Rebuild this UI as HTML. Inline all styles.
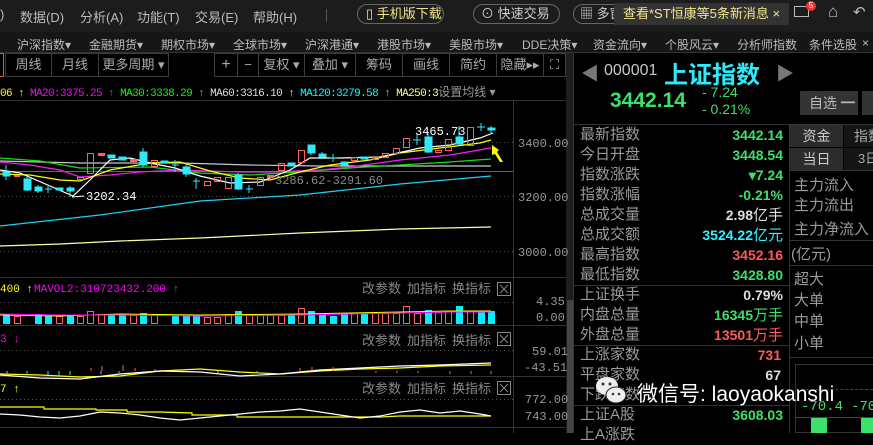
<!DOCTYPE html>
<html><head><meta charset="utf-8"><style>
*{margin:0;padding:0;box-sizing:border-box}
body{width:873px;height:433px;background:#000;overflow:hidden;position:relative;font-family:"Liberation Sans","Noto Sans CJK SC",sans-serif;color:#c8c8c8}
.a{position:absolute;white-space:nowrap}
.m{font-size:12px;color:#bbb}
.btn{position:absolute;border:1px solid #3c3c3c;height:24px;top:53px;font-size:13px;color:#aaa;text-align:center;line-height:22px}
.lbl{position:absolute;left:580px;font-size:15px;color:#9a9a9a;line-height:20px}
.val{position:absolute;right:90px;font-size:14px;font-weight:bold;line-height:20px}
.g{color:#3ce06a}.r{color:#ff5a5a}.w{color:#ddd}.c{color:#30f0ff}
.rl{position:absolute;left:794px;font-size:15px;color:#9a9a9a}
</style></head><body>
<div class="a" style="left:0;top:0;width:873px;height:32px;background:#1c1c1c"></div>
<div class="a m" style="left:0;top:7px;font-size:13px">)</div>
<div class="a m" style="left:20px;top:7px;font-size:13px">数据(D)</div>
<div class="a m" style="left:80px;top:7px;font-size:13px">分析(A)</div>
<div class="a m" style="left:137px;top:7px;font-size:13px">功能(T)</div>
<div class="a m" style="left:195px;top:7px;font-size:13px">交易(E)</div>
<div class="a m" style="left:253px;top:7px;font-size:13px">帮助(H)</div>
<div class="a" style="left:326px;top:9px;width:1px;height:13px;background:#555"></div>
<div class="a" style="left:357px;top:4px;width:87px;height:20px;border:1px solid #666;border-radius:10px;color:#f0e68c;font-size:13px;line-height:18px;padding-left:8px">▯ 手机版下载</div>
<div class="a" style="left:473px;top:4px;width:87px;height:20px;border:1px solid #666;border-radius:10px;color:#ccc;font-size:13px;line-height:18px;padding-left:7px">⊙ 快速交易</div>
<div class="a" style="left:573px;top:4px;width:60px;height:20px;border:1px solid #666;border-radius:10px;color:#ccc;font-size:13px;line-height:18px;padding-left:6px">▦ 多窗</div>
<div class="a" style="left:614px;top:3px;width:175px;height:22px;background:#333;color:#f0e68c;font-size:13px;line-height:22px;padding-left:9px">查看*ST恒康等5条新消息 ×</div>
<div class="a" style="left:794px;top:6px;width:15px;height:11px;border:1px solid #bbb"></div>
<div class="a" style="left:806px;top:1px;width:10px;height:10px;border-radius:5px;background:#e33;color:#fff;font-size:8px;text-align:center;line-height:10px">5</div>
<div class="a" style="left:828px;top:2px;color:#bbb;font-size:17px">⌂</div>
<div class="a" style="left:853px;top:3px;color:#bbb;font-size:15px">↶</div>
<div class="a" style="left:0;top:32px;width:873px;height:21px;background:#161616;border-bottom:1px solid #333"></div>
<div class="a m" style="left:17px;top:36px">沪深指数▾</div>
<div class="a m" style="left:89px;top:36px">金融期货▾</div>
<div class="a m" style="left:161px;top:36px">期权市场▾</div>
<div class="a m" style="left:233px;top:36px">全球市场▾</div>
<div class="a m" style="left:305px;top:36px">沪深港通▾</div>
<div class="a m" style="left:377px;top:36px">港股市场▾</div>
<div class="a m" style="left:449px;top:36px">美股市场▾</div>
<div class="a m" style="left:522px;top:36px">DDE决策▾</div>
<div class="a m" style="left:593px;top:36px">资金流向▾</div>
<div class="a m" style="left:665px;top:36px">个股风云▾</div>
<div class="a m" style="left:737px;top:36px">分析师指数</div>
<div class="a m" style="left:809px;top:36px">条件选股</div>
<div class="a m" style="left:862px;top:36px">×</div>
<div class="a" style="left:0;top:53px;width:4px;height:24px;border:1px solid #e06020;border-left:none"></div>
<div class="btn" style="left:5px;width:47px">周线</div>
<div class="btn" style="left:51px;width:48px">月线</div>
<div class="btn" style="left:98px;width:71px">更多周期 ▾</div>
<div class="btn" style="left:214px;width:24px;font-size:16px">+</div>
<div class="btn" style="left:237px;width:22px">−</div>
<div class="btn" style="left:258px;width:47px">复权 ▾</div>
<div class="btn" style="left:304px;width:52px">叠加 ▾</div>
<div class="btn" style="left:355px;width:48px">筹码</div>
<div class="btn" style="left:402px;width:48px">画线</div>
<div class="btn" style="left:449px;width:48px">简约</div>
<div class="btn" style="left:496px;width:48px">隐藏▸▸</div>
<div class="btn" style="left:543px;width:23px">⛶</div>
<div class="a" style="left:0;top:83px;font-size:11px;letter-spacing:-0.6px;font-family:'Liberation Mono',monospace"><span style="color:#ff0">06 ↑</span> <span style="color:#f0f">MA20:3375.25 ↑</span> <span style="color:#0f0">MA30:3338.29 ↑</span> <span style="color:#ddd">MA60:3316.10 ↑</span> <span style="color:#0ff">MA120:3279.58 ↑</span> <span style="color:#ff8">MA250:3</span><span style="color:#999;letter-spacing:0;font-family:'Liberation Sans','Noto Sans CJK SC',sans-serif;font-size:12px">设置均线 ▾</span></div>
<div class="a" style="left:566px;top:53px;width:7px;height:380px;background:#1e1e1e"></div>
<div class="a" style="left:567px;top:300px;width:6px;height:133px;background:#444"></div>
<svg class="a" style="left:0;top:0" width="573" height="433">
<g stroke="#333" stroke-width="1">
<line x1="0" y1="100.5" x2="566" y2="100.5"/>
<line x1="513.5" y1="100" x2="513.5" y2="433"/>
<line x1="0" y1="277.5" x2="566" y2="277.5"/>
<line x1="0" y1="325.5" x2="566" y2="325.5"/>
<line x1="0" y1="376.5" x2="566" y2="376.5"/>
<line x1="0" y1="427.5" x2="566" y2="427.5"/>
</g>
<g stroke="#555" stroke-dasharray="1,3">
<line x1="0" y1="142.5" x2="513" y2="142.5"/><line x1="0" y1="196.5" x2="513" y2="196.5"/><line x1="0" y1="251.5" x2="513" y2="251.5"/>
<line x1="0" y1="302.5" x2="513" y2="302.5"/><line x1="0" y1="350.5" x2="513" y2="350.5"/><line x1="0" y1="399.5" x2="513" y2="399.5"/>
</g>
<line x1="0" y1="171.5" x2="513" y2="171.5" stroke="#666"/>
<g font-family="Liberation Mono,monospace" font-size="12" fill="#999">
<text x="518" y="147">3400.00</text><text x="518" y="201">3200.00</text><text x="518" y="256">3000.00</text>
<text x="536" y="305">4.35</text><text x="536" y="321">0.00</text>
<text x="532" y="355">59.01</text><text x="524" y="371">-43.51</text>
<text x="525" y="403">772.00</text><text x="525" y="420">743.00</text>
</g>
<g fill="none" stroke-width="1.2">
<polyline stroke="#ffffa0" points="0,246 60,244 120,241 200,238 300,233 400,229 491,227"/>
<polyline stroke="#20d0f0" points="0,226 100,215 200,201 300,195 400,184 491,176"/>
<polyline stroke="#c8c8c8" points="0,161 80,163 180,163 250,165 320,166 400,166 491,166"/>
<polyline stroke="#10e010" points="0,158 40,161 80,168 150,167 200,173 250,175 300,172 350,168 400,165 450,162 491,159"/>
<polyline stroke="#f020f0" points="0,162 30,165 60,170 80,177 110,175 140,172 180,170 240,172 270,172 320,170 350,167 400,160 450,155 491,148"/>
<polyline stroke="#ffff00" points="0,174 30,175 60,180 80,181 110,170 150,163 180,162 210,171 240,178 270,180 300,172 330,165 370,160 400,153 440,148 480,143 491,140"/>
<polyline stroke="#fff" points="0,170 20,173 50,186 73,196 90,180 110,160 130,158 150,163 175,168 200,176 230,183 260,182 290,170 310,158 340,158 380,157 420,148 450,145 480,138 493,133"/>
</g>
<g stroke="#30e8f8" fill="#30e8f8">
<line x1="6" y1="165" x2="6" y2="180"/><rect x="3" y="172" width="7" height="4"/>
<line x1="27" y1="177" x2="27" y2="191"/><rect x="24" y="179" width="7" height="11"/>
<line x1="38" y1="185" x2="38" y2="193"/><rect x="35" y="187" width="7" height="4"/>
<line x1="48" y1="185" x2="48" y2="193"/><line x1="45" y1="189" x2="52" y2="189"/>
<rect x="56" y="188" width="7" height="2"/>
<line x1="70" y1="186" x2="70" y2="197"/><rect x="67" y="188" width="7" height="3"/>
<rect x="108" y="155" width="7" height="3"/><rect x="119" y="157" width="7" height="3"/>
<line x1="143" y1="148" x2="143" y2="167"/><rect x="140" y="152" width="7" height="13"/>
<rect x="161" y="161" width="7" height="2"/>
<line x1="175" y1="160" x2="175" y2="172"/><line x1="172" y1="165" x2="179" y2="165"/>
<line x1="186" y1="165" x2="186" y2="177"/><rect x="183" y="167" width="7" height="7"/>
<line x1="196" y1="178" x2="196" y2="189"/><line x1="193" y1="181" x2="200" y2="181"/>
<line x1="238" y1="173" x2="238" y2="190"/><rect x="235" y="175" width="7" height="14"/>
<line x1="249" y1="185" x2="249" y2="193"/><line x1="246" y1="189" x2="253" y2="189"/>
<rect x="288" y="163" width="7" height="3"/>
<line x1="311" y1="145" x2="311" y2="155"/><rect x="308" y="145" width="7" height="8"/>
<line x1="322" y1="152" x2="322" y2="159"/><rect x="319" y="154" width="7" height="3"/>
<line x1="333" y1="154" x2="333" y2="162"/><line x1="330" y1="158" x2="337" y2="158"/>
<rect x="341" y="162" width="7" height="3"/><rect x="361" y="157" width="7" height="2"/>
<line x1="417" y1="135" x2="417" y2="145"/><line x1="413" y1="140" x2="421" y2="140"/>
<line x1="428" y1="134" x2="428" y2="153"/><rect x="425" y="137" width="7" height="15"/>
<line x1="459" y1="126" x2="459" y2="145"/><rect x="456" y="137" width="7" height="7"/>
<line x1="481" y1="123" x2="481" y2="131"/><line x1="477" y1="127" x2="485" y2="127"/>
<line x1="491" y1="126" x2="491" y2="133"/><rect x="488" y="128" width="7" height="2"/>
</g>
<g stroke="#ff6060" fill="none">
<rect x="14.5" y="175.5" width="5" height="1"/>
<rect x="77.5" y="177.5" width="6" height="2"/>
<rect x="87.5" y="153.5" width="6" height="20"/>
<rect x="98.5" y="153.5" width="6" height="2" fill="#ff6060"/>
<rect x="130.5" y="159.5" width="6" height="2" fill="#ff6060"/>
<rect x="151.5" y="160.5" width="6" height="6"/>
<rect x="204.5" y="181.5" width="6" height="4"/>
<rect x="214.5" y="177.5" width="6" height="4"/>
<rect x="225.5" y="177.5" width="6" height="11"/>
<rect x="257.5" y="177.5" width="6" height="8"/>
<rect x="267.5" y="175.5" width="6" height="2" fill="#ff6060"/>
<rect x="278.5" y="163.5" width="6" height="7"/>
<rect x="298.5" y="150.5" width="6" height="12"/>
<rect x="351.5" y="157.5" width="6" height="3"/>
<rect x="372.5" y="157.5" width="6" height="2"/>
<rect x="382.5" y="153.5" width="6" height="4"/>
<rect x="393.5" y="148.5" width="6" height="5"/>
<rect x="403.5" y="138.5" width="6" height="9"/>
<rect x="435.5" y="150.5" width="6" height="2"/>
<rect x="445.5" y="139.5" width="6" height="11"/>
<rect x="467.5" y="127.5" width="6" height="18"/>
</g>
<g font-family="Liberation Mono,monospace" font-size="12">
<text x="86" y="200" fill="#fff">3202.34</text>
<text x="415" y="135" fill="#fff">3465.73</text>
<text x="275" y="184" fill="#888">3286.62-3291.60</text>
</g>
<line x1="84" y1="196" x2="72" y2="197" stroke="#fff"/>
<polygon points="492,145 499,150 497,152 503,162 500,162 495,154 492,155" fill="#ff0"/>
<g font-size="11" font-family="Liberation Mono,monospace">
<text x="0" y="292" fill="#ff0">400 ↑</text><text x="34" y="292" fill="#f0f">MAVOL2:310723432.200 ↑</text>
<text x="0" y="342" fill="#f0f">3 ↓</text>
<text x="0" y="392" fill="#ff0">7 ↑</text>
</g>
<g font-size="13" fill="#888" font-family="Liberation Sans,Noto Sans CJK SC,sans-serif">
<text x="362" y="293">改参数</text><text x="407" y="293">加指标</text><text x="452" y="293">换指标</text>
<text x="362" y="345">改参数</text><text x="407" y="345">加指标</text><text x="452" y="345">换指标</text>
<text x="362" y="393">改参数</text><text x="407" y="393">加指标</text><text x="452" y="393">换指标</text>
</g>
<g stroke="#888" fill="none"><rect x="497.5" y="282.5" width="13" height="13"/><rect x="497.5" y="332.5" width="13" height="13"/><rect x="497.5" y="381.5" width="13" height="13"/>
<path d="M500 285l8 8M508 285l-8 8M500 335l8 8M508 335l-8 8M500 384l8 8M508 384l-8 8"/></g>
<g fill="#00f0ff">
<rect x="3" y="314" width="7" height="10"/><rect x="35" y="314" width="7" height="10"/><rect x="45" y="316" width="7" height="8"/><rect x="67" y="315" width="7" height="9"/>
<rect x="108" y="315" width="7" height="9"/><rect x="119" y="315" width="7" height="9"/><rect x="140" y="313" width="7" height="11"/><rect x="172" y="315" width="7" height="9"/><rect x="183" y="315" width="7" height="9"/><rect x="193" y="315" width="7" height="9"/>
<rect x="235" y="311" width="7" height="13"/><rect x="288" y="314" width="7" height="10"/><rect x="308" y="311" width="7" height="13"/><rect x="319" y="315" width="7" height="9"/><rect x="330" y="316" width="7" height="8"/><rect x="341" y="313" width="7" height="11"/><rect x="361" y="313" width="7" height="11"/>
<rect x="425" y="310" width="7" height="14"/><rect x="456" y="306" width="7" height="18"/><rect x="478" y="312" width="7" height="12"/><rect x="488" y="311" width="7" height="13"/>
</g>
<g stroke="#ff6060" fill="none">
<rect x="14.5" y="316.5" width="6" height="7"/><rect x="56.5" y="316.5" width="6" height="7"/><rect x="77.5" y="316.5" width="6" height="7"/><rect x="87.5" y="311.5" width="6" height="12"/><rect x="98.5" y="314.5" width="6" height="9"/><rect x="130.5" y="315.5" width="6" height="8"/><rect x="151.5" y="315.5" width="6" height="8"/>
<rect x="204.5" y="317.5" width="6" height="6"/><rect x="214.5" y="317.5" width="6" height="6"/><rect x="225.5" y="314.5" width="6" height="9"/><rect x="246.5" y="314.5" width="6" height="9"/><rect x="257.5" y="315.5" width="6" height="8"/><rect x="267.5" y="315.5" width="6" height="8"/><rect x="278.5" y="315.5" width="6" height="8"/><rect x="298.5" y="308.5" width="6" height="15"/>
<rect x="351.5" y="313.5" width="6" height="10"/><rect x="372.5" y="313.5" width="6" height="10"/><rect x="382.5" y="313.5" width="6" height="10"/><rect x="393.5" y="313.5" width="6" height="10"/><rect x="403.5" y="306.5" width="6" height="17"/><rect x="414.5" y="313.5" width="6" height="10"/><rect x="435.5" y="312.5" width="6" height="11"/><rect x="445.5" y="311.5" width="6" height="12"/><rect x="467.5" y="311.5" width="6" height="12"/>
</g>
<polyline fill="none" stroke="#ff0" points="0,315 60,316 120,314 200,315 300,314 350,313 400,312 450,311 491,311"/>
<polyline fill="none" stroke="#f0f" points="0,314 60,315 120,315 200,316 300,315 350,314 400,313 450,312 491,312"/>
<polyline fill="none" stroke="#ff0" stroke-width="1.2" points="0,374 40,375 80,377 120,376 160,371 200,369 240,372 280,374 320,371 360,369 400,368 440,366 491,365"/>
<polyline fill="none" stroke="#fff" stroke-width="1.2" points="0,375 40,378 80,379 120,374 160,371 200,372 240,376 280,374 320,370 360,368 400,366 440,365 491,363"/>
<g stroke="#30e8f8"><path d="M7 371v3M27 371v4M48 371v4M59 371v5M70 371v4M101 371v3M119 371v2M218 371v2M239 371v2M257 371v2"/></g>
<g stroke="#ff6060"><path d="M91 368v3M102 366v5M123 365v6M135 368v3M155 369v2M300 368v3M312 367v4M333 367v4M376 371v2M397 371v2M418 371v2M450 371v3M471 371v3M491 371v3"/></g>
<polyline fill="none" stroke="#ff0" stroke-width="1.2" points="0,407 44,407 44,409 96,409 96,410 127,410 127,412 160,412 192,413 192,415 237,415 237,417 300,417 380,417 400,416 491,416"/>
<polyline fill="none" stroke="#fff" stroke-width="1.2" points="0,414 20,415 40,417 60,418 80,416 100,412 120,413 140,415 160,418 180,420 200,418 220,416 240,414 260,412 280,411 300,409 320,412 340,415 360,418 380,416 400,412 420,410 440,413 460,411 480,414 491,416"/>
</svg>
<div class="a" style="left:573px;top:53px;width:1px;height:380px;background:#333"></div>
<div class="a" style="left:581px;top:60px;color:#777;font-size:18px">◀</div>
<div class="a" style="left:604px;top:62px;color:#c8c8c8;font-size:16px">000001</div>
<div class="a" style="left:664px;top:55px;color:#30e8f8;font-size:24px;font-weight:bold">上证指数</div>
<div class="a" style="left:776px;top:60px;color:#777;font-size:18px">▶</div>
<div class="a g" style="left:610px;top:89px;font-size:21px;font-weight:bold">3442.14</div>
<div class="a g" style="left:702px;top:84px;font-size:14px">- 7.24</div>
<div class="a g" style="left:702px;top:101px;font-size:14px">- 0.21%</div>
<div class="a" style="left:800px;top:91px;width:58px;height:24px;background:#333;color:#bbb;font-size:14px;line-height:24px;padding-left:9px">自选 ━</div>
<div class="a" style="left:862px;top:91px;width:11px;height:24px;background:#333"></div>
<div class="a" style="left:573px;top:124px;width:300px;height:1px;background:#333"></div>
<div class="a" style="left:789px;top:124px;width:1px;height:309px;background:#333"></div>
<div class="lbl" style="top:125px">最新指数</div><div class="val g" style="top:125px">3442.14</div>
<div class="lbl" style="top:145px">今日开盘</div><div class="val g" style="top:145px">3448.54</div>
<div class="lbl" style="top:165px">指数涨跌</div><div class="val g" style="top:165px">▾7.24</div>
<div class="lbl" style="top:185px">指数涨幅</div><div class="val g" style="top:185px">-0.21%</div>
<div class="lbl" style="top:205px">总成交量</div><div class="val w" style="top:205px">2.98<span style="font-weight:normal;font-size:15px">亿手</span></div>
<div class="lbl" style="top:225px">总成交额</div><div class="val c" style="top:225px">3524.22<span style="font-weight:normal;font-size:15px">亿元</span></div>
<div class="lbl" style="top:245px">最高指数</div><div class="val r" style="top:245px">3452.16</div>
<div class="lbl" style="top:265px">最低指数</div><div class="val g" style="top:265px">3428.80</div>
<div class="a" style="left:573px;top:285px;width:216px;height:1px;background:#333"></div>
<div class="lbl" style="top:285px">上证换手</div><div class="val w" style="top:285px">0.79%</div>
<div class="lbl" style="top:305px">内盘总量</div><div class="val g" style="top:305px">16345<span style="font-weight:normal;font-size:15px">万手</span></div>
<div class="lbl" style="top:325px">外盘总量</div><div class="val r" style="top:325px">13501<span style="font-weight:normal;font-size:15px">万手</span></div>
<div class="a" style="left:573px;top:345px;width:216px;height:1px;background:#333"></div>
<div class="lbl" style="top:345px">上涨家数</div><div class="val r" style="top:345px;right:92px">731</div>
<div class="lbl" style="top:365px">平盘家数</div><div class="val w" style="top:365px;right:92px">67</div>
<div class="lbl" style="top:385px">下跌家数</div>
<div class="a" style="left:573px;top:405px;width:216px;height:1px;background:#333"></div>
<div class="lbl" style="top:405px">上证A股</div><div class="val g" style="top:405px">3608.03</div>
<div class="lbl" style="top:425px">上A涨跌</div>
<div class="a" style="left:790px;top:125px;width:53px;height:22px;background:#2c2c2c;color:#ccc;font-size:14px;line-height:22px;text-align:center">资金</div>
<div class="a" style="left:844px;top:125px;width:29px;height:22px;background:#151515;color:#aaa;font-size:14px;line-height:22px;padding-left:10px">指数</div>
<div class="a" style="left:790px;top:148px;width:53px;height:22px;background:#2c2c2c;color:#ccc;font-size:14px;line-height:22px;text-align:center">当日</div>
<div class="a" style="left:844px;top:148px;width:29px;height:22px;background:#151515;color:#aaa;font-size:13px;line-height:22px;padding-left:14px">3日</div>
<div class="a" style="left:790px;top:170px;width:83px;height:1px;background:#333"></div>
<div class="rl" style="top:174px">主力流入</div>
<div class="rl" style="top:194px">主力流出</div>
<div class="rl" style="top:218px">主力净流入</div>
<div class="a" style="left:790px;top:240px;width:83px;height:1px;background:#333"></div>
<div class="rl" style="top:243px;left:791px">(亿元)</div>
<div class="a" style="left:790px;top:265px;width:83px;height:1px;background:#333"></div>
<div class="rl" style="top:268px">超大</div>
<div class="rl" style="top:289px">大单</div>
<div class="rl" style="top:310px">中单</div>
<div class="rl" style="top:332px">小单</div>
<div class="a" style="left:790px;top:357px;width:83px;height:1px;background:#333"></div>
<div class="a" style="left:795px;top:364px;width:78px;height:69px;border:1px solid #333;border-right:none"></div>
<div class="a" style="left:796px;top:389px;width:77px;border-top:1px dashed #444"></div>
<div class="a g" style="left:801px;top:399px;font-size:14px;font-family:'Liberation Mono',monospace">-70.4</div>
<div class="a g" style="left:851px;top:399px;font-size:14px;font-family:'Liberation Mono',monospace">-70</div>
<div class="a" style="left:795px;top:417px;width:78px;height:1px;background:#444"></div>
<div class="a" style="left:811px;top:418px;width:16px;height:15px;background:#3ce06a"></div>
<div class="a" style="left:861px;top:418px;width:12px;height:15px;background:#3ce06a"></div>
<svg class="a" style="left:595px;top:374px" width="34" height="34"><ellipse cx="12" cy="12" rx="11" ry="9" fill="#eee"/><ellipse cx="21" cy="21" rx="10" ry="8" fill="#eee" stroke="#222" stroke-width="1"/><circle cx="8" cy="10" r="1.5" fill="#333"/><circle cx="15" cy="10" r="1.5" fill="#333"/><circle cx="18" cy="20" r="1.3" fill="#333"/><circle cx="24" cy="20" r="1.3" fill="#333"/></svg>
<div class="a" style="left:637px;top:378px;color:#fff;font-size:21px;text-shadow:0 0 2px #000">微信号: laoyaokanshi</div>
</body></html>
